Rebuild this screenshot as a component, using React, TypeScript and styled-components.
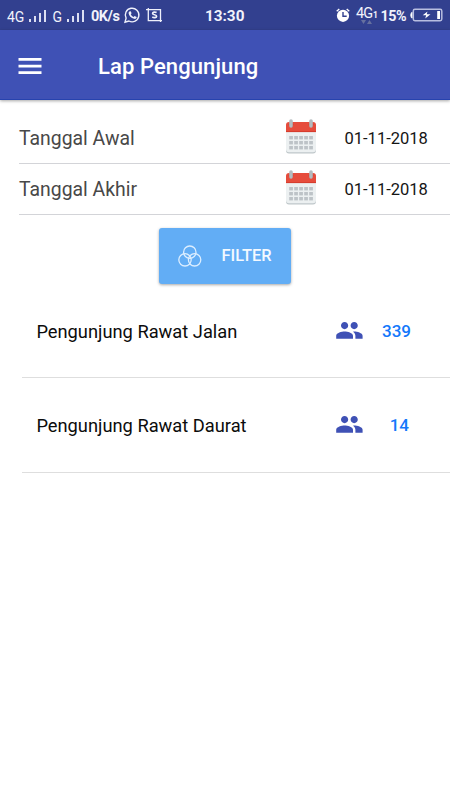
import React from "react";
import styled, { createGlobalStyle } from "styled-components";

const GlobalStyle = createGlobalStyle`
  * { box-sizing: border-box; }
  body { margin: 0; background: #fff; font-family: Roboto, sans-serif; }
  svg { display: block; flex: none; overflow: visible; }
`;

const Screen = styled.div`
  width: 450px;
  height: 800px;
  overflow: hidden;
  background: #fff;
`;

const StatusBar = styled.div`
  display: flex;
  height: 30px;
  background: #32408f;
  color: #f1f2fb;
`;

const StatusItem = styled.div<{ $w: number; $size?: number; $weight?: number; $ls?: number; $lh?: number }>`
  flex: none;
  width: ${(p) => p.$w}px;
  font-size: ${(p) => p.$size ?? 14}px;
  font-weight: ${(p) => p.$weight ?? 400};
  letter-spacing: ${(p) => p.$ls ?? 0}px;
  line-height: ${(p) => p.$lh ?? 32}px;
  white-space: nowrap;
`;

const AppBar = styled.header`
  display: flex;
  align-items: center;
  height: 70px;
  padding: 2px 0 0 18px;
  gap: 56px;
  background: #3f51b5;
  border-bottom: 1px solid #2743ae;
  box-shadow: 0 1px 3px rgba(0, 0, 0, 0.35);
`;

const Title = styled.h1`
  margin: 0;
  padding-top: 2px;
  font-size: 22px;
  font-weight: 500;
  line-height: 28px;
  letter-spacing: 0.1px;
  color: #fff;
`;

const DateList = styled.section`
  margin-left: 19px;
  padding-top: 13px;
`;

const DateRow = styled.div`
  display: grid;
  grid-template-columns: 266px 59.5px 1fr;
  align-items: center;
  height: 51px;
  border-bottom: 1px solid #d3d4d8;

  svg {
    margin-top: -2px;
  }
`;

const DateLabel = styled.span`
  padding-top: 2px;
  font-size: 19.4px;
  line-height: 24px;
  color: #484848;
`;

const DateValue = styled.span`
  padding-top: 2px;
  font-size: 16.5px;
  line-height: 24px;
  color: #141414;
`;

const FilterButton = styled.button`
  display: flex;
  align-items: center;
  width: 132.5px;
  height: 56.5px;
  margin: 12.5px 0 0 158.5px;
  padding: 1px 0 0 19.5px;
  gap: 19.5px;
  border: 0;
  border-radius: 3px;
  background: #62adf5;
  box-shadow: 0 1px 3px rgba(0, 0, 0, 0.35);
  color: #f3f9ff;
  font: 500 16.4px/24px Roboto, sans-serif;
`;

const VisitorList = styled.section`
  margin-left: 22px;
`;

const VisitorRow = styled.div`
  display: grid;
  grid-template-columns: 299px 28.8px 1fr;
  align-items: center;
  height: 94.5px;
  padding: 0 36px 0 14.4px;
  border-bottom: 1px solid #dedede;

  &:first-child {
    height: 94px;
  }
`;

const VisitorLabel = styled.span`
  padding-top: 2px;
  font-size: 18.3px;
  line-height: 26px;
  color: #0c0c0c;
`;

const VisitorCount = styled.span<{ $inset: number }>`
  padding: 1px ${(p) => p.$inset}px 0 0;
  font-size: 17px;
  font-weight: 500;
  line-height: 26px;
  text-align: right;
  color: #1478fb;
`;

const SignalIcon = () => (
  <svg width="20" height="30" viewBox="0 0 20 30" stroke="#dcdff2" strokeWidth="2">
    <path d="M2 22v-3M7 22v-6M12 22v-9M17 22V10" />
  </svg>
);

const ChatIcon = () => (
  <svg width="17" height="30" viewBox="0 0 17 30" fill="none" stroke="#eef0fb">
    <path d="M1 22.2l1.1-4A6.8 6.8 0 1 1 4.9 21z" strokeWidth="1.4" />
    <path d="M5.3 11.5l1.4-.3.9 2.1-.8.9c.7 1.5 1.5 2.1 2.8 2.7l1-.9 2.1 1c0 1.5-1.4 2.1-2.6 1.8-3-.8-5.2-3.2-5.5-5.6-.1-.8.2-1.3.7-1.7z" fill="#eef0fb" stroke="none" />
  </svg>
);

const CropIcon = () => (
  <svg width="17" height="30" viewBox="0 0 17 30" fill="none" stroke="#eef0fb" strokeWidth="1.3">
    <path d="M0 9.7h14.5V22M2.3 8v12.7H16" />
    <path d="M10.6 12.6c-1.6-.9-4-.6-4 .8 0 1.8 4 .9 4 2.8 0 1.6-2.6 1.8-4.3.8" strokeWidth="1.7" />
  </svg>
);

const AlarmIcon = () => (
  <svg width="16" height="30" viewBox="0 0 16 30">
    <circle cx="7" cy="15.8" r="6.1" fill="#fff" />
    <path d="M.7 11.3l2.6-2.4M13.3 11.3l-2.6-2.4" stroke="#fff" strokeWidth="1.3" />
    <path d="M7 12v4.3h3.7" fill="none" stroke="#32408f" strokeWidth="1.4" />
  </svg>
);

const BatteryIcon = () => (
  <svg width="34" height="30" viewBox="0 0 34 30">
    <path d="M2.5 12.7H1.4q-1.3 2.5 0 5h1.1" fill="#fff" stroke="#fff" />
    <rect x="3.3" y="9.3" width="28.5" height="11.4" rx="1.6" fill="none" stroke="#b8bee0" strokeWidth="1.5" />
    <path d="M27.2 11H30v8h-2.8z" fill="#fff" />
    <path d="M17.5 11.5l-4.8 3.8h3.5l-1 3.2 5.3-4.2h-3.8z" fill="#fff" />
  </svg>
);

const MenuIcon = () => (
  <svg width="24" height="16" viewBox="0 0 24 16" fill="#fff">
    <path d="M.5 0h23v2.7H.5zM.5 6.7h23v2.7H.5zM.5 13.2h23v2.7H.5z" />
  </svg>
);

const CalendarIcon = () => (
  <svg width="32" height="36" viewBox="0 0 32 36">
    <path d="M1 13h30v18.5a3 3 0 0 1-3 3H4a3 3 0 0 1-3-3z" fill="#bfc7ca" />
    <path d="M1 13h30v17.3a3 3 0 0 1-3 3H4a3 3 0 0 1-3-3z" fill="#ecf0f1" />
    <path d="M4 3h24a3 3 0 0 1 3 3v7H1V6a3 3 0 0 1 3-3z" fill="#e64c3c" />
    <path d="M1 12.2h30v.9H1z" fill="#d23a2b" />
    <circle cx="6" cy="5.8" r="2.3" fill="#b9382d" />
    <circle cx="26" cy="5.8" r="2.3" fill="#b9382d" />
    <rect x="4.2" y=".3" width="3.6" height="8.4" rx="1.8" fill="#b3bcbf" />
    <rect x="24.2" y=".3" width="3.6" height="8.4" rx="1.8" fill="#b3bcbf" />
    {[17, 22, 27].map((y) =>
      [4.2, 9.2, 14.2, 19.2, 24.2].map((x) => <rect key={`${x}-${y}`} x={x} y={y} width="3.7" height="3.4" fill="#bdc3c7" />)
    )}
  </svg>
);

const FilterIcon = () => (
  <svg width="24" height="22" viewBox="0 0 24 22" fill="none" stroke="#dceeff" strokeWidth="1.3">
    <circle cx="11.8" cy="7.2" r="6.2" />
    <circle cx="7" cy="14.8" r="6.2" />
    <circle cx="16.6" cy="14.8" r="6.2" />
  </svg>
);

const PeopleIcon = () => (
  <svg width="28.8" height="28.8" viewBox="0 0 24 24" fill="#3f51b5">
    <path d="M16 11c1.66 0 2.99-1.34 2.99-3S17.66 5 16 5s-3 1.34-3 3 1.34 3 3 3zm-8 0c1.66 0 2.99-1.34 2.99-3S9.66 5 8 5 5 6.34 5 8s1.34 3 3 3zm0 2c-2.33 0-7 1.17-7 3.5V19h14v-2.5c0-2.33-4.67-3.5-7-3.5zm8 0c-.29 0-.62.02-.97.05 1.16.84 1.97 1.97 1.97 3.45V19h6v-2.5c0-2.33-4.67-3.5-7-3.5z" />
  </svg>
);

const NetworkArrows = styled.svg`
  margin-top: -8px;
`;

const dates = [
  { label: "Tanggal Awal", value: "01-11-2018" },
  { label: "Tanggal Akhir", value: "01-11-2018" },
];

const visitors = [
  { label: "Pengunjung Rawat Jalan", count: 339, inset: 3 },
  { label: "Pengunjung Rawat Daurat", count: 14, inset: 5 },
];

export default function App() {
  return (
    <Screen>
      <GlobalStyle />
      <StatusBar>
        <StatusItem $w={7} />
        <StatusItem $w={20.5} $size={14} $ls={-0.2} $lh={34}>4G</StatusItem>
        <StatusItem $w={25}><SignalIcon /></StatusItem>
        <StatusItem $w={13.5} $size={14} $lh={34}>G</StatusItem>
        <StatusItem $w={25}><SignalIcon /></StatusItem>
        <StatusItem $w={33} $size={14.5} $weight={700} $ls={-0.5} $lh={33}>0K/s</StatusItem>
        <StatusItem $w={22}><ChatIcon /></StatusItem>
        <StatusItem $w={59}><CropIcon /></StatusItem>
        <StatusItem $w={131} $size={15.3} $weight={700}>13:30</StatusItem>
        <StatusItem $w={20}><AlarmIcon /></StatusItem>
        <StatusItem $w={17} $size={14.5} $lh={28} $ls={-0.8}>
          4G
          <NetworkArrows width="12" height="5" viewBox="0 0 12 5" fill="#66709f">
            <path d="M5 0h5L7.5 4zM11 4h5l-2.5-4z" />
          </NetworkArrows>
        </StatusItem>
        <StatusItem $w={7.5} $size={8.5} $weight={700} $lh={31}>1</StatusItem>
        <StatusItem $w={29.5} $size={14.3} $weight={700} $ls={-0.4}>15%</StatusItem>
        <StatusItem $w={34}><BatteryIcon /></StatusItem>
      </StatusBar>
      <AppBar>
        <MenuIcon />
        <Title>Lap Pengunjung</Title>
      </AppBar>
      <DateList>
        {dates.map((d) => (
          <DateRow key={d.label}>
            <DateLabel>{d.label}</DateLabel>
            <CalendarIcon />
            <DateValue>{d.value}</DateValue>
          </DateRow>
        ))}
      </DateList>
      <FilterButton>
        <FilterIcon />
        FILTER
      </FilterButton>
      <VisitorList>
        {visitors.map((v) => (
          <VisitorRow key={v.label}>
            <VisitorLabel>{v.label}</VisitorLabel>
            <PeopleIcon />
            <VisitorCount $inset={v.inset}>{v.count}</VisitorCount>
          </VisitorRow>
        ))}
      </VisitorList>
    </Screen>
  );
}
